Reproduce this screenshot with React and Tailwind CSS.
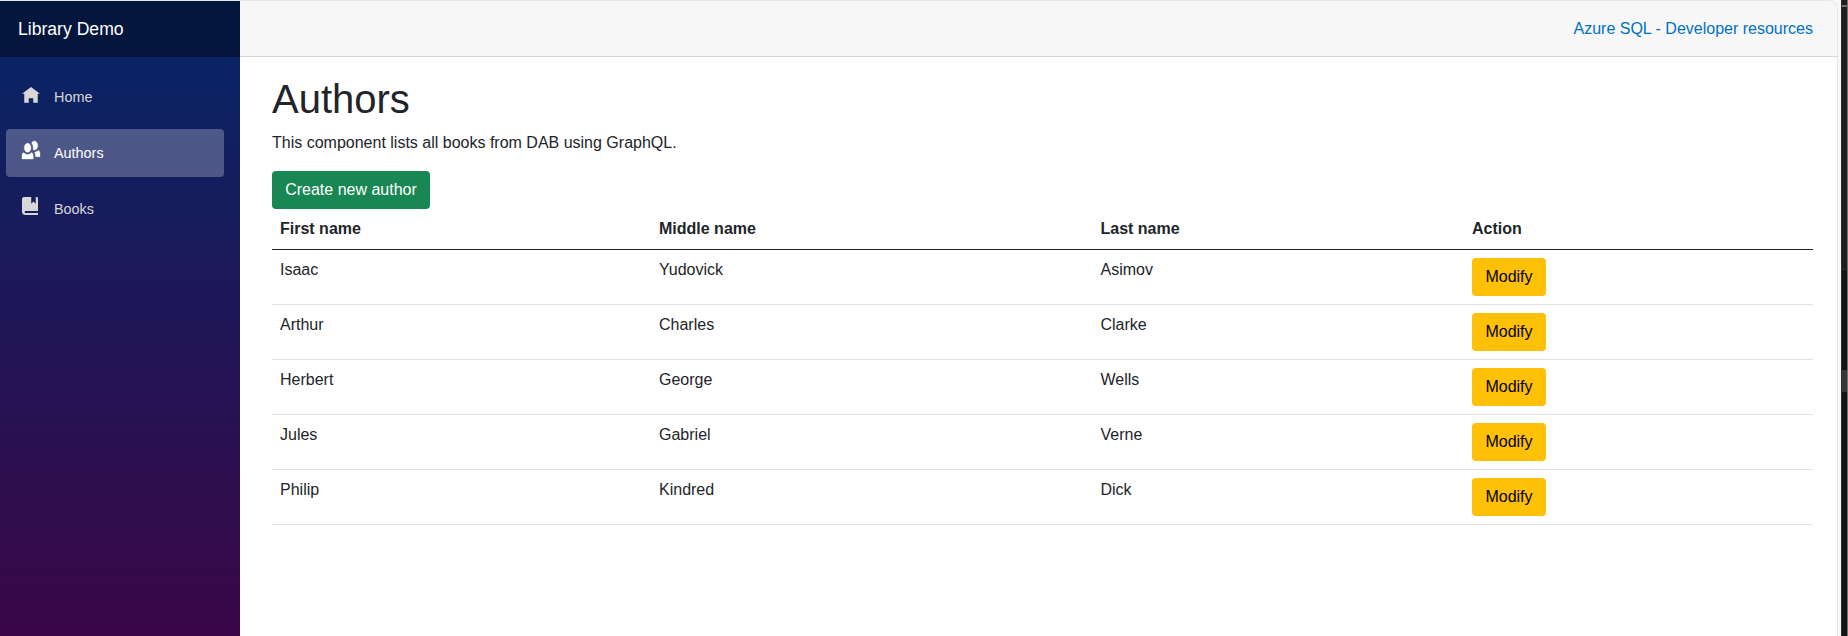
const icons = {
  home: 'M4 0l-4 3h1v4h2v-2h2v2h2v-4.03l1 .03-4-3z',
  people:
    'M5.5 0c-.51 0-.95.35-1.22.88.45.54.72 1.275.72 2.125 0 .29-.03.55-.09.81.19.11.38.19.59.19.83 0 1.5-.9 1.5-2s-.67-2-1.5-2zm-3 1c-.828 0-1.5.895-1.5 2s.672 2 1.5 2 1.5-.895 1.5-2-.672-2-1.5-2zm4.75 3.16c-.43.51-1.02.82-1.69.84.27.38.44.84.44 1.34v.66h2v-1.66c0-.52-.31-.97-.75-1.19zm-6.5 1c-.44.22-.75.67-.75 1.19v1.66h5v-1.66c0-.52-.31-.97-.75-1.19-.45.53-1.06.84-1.75.84s-1.3-.32-1.75-.84z',
  book: 'M1 0c-.07 0-.13.01-.19.03-.39.08-.7.39-.78.78-.03.06-.03.12-.03.19v5.5c0 .83.67 1.5 1.5 1.5h5.6v-.9h-5.5c-.28 0-.4-.22-.4-.42s.12-.42.4-.42h5.5v-5.76c0-.28-.22-.5-.5-.5h-.5v3l-1-1-1 1v-3h-3z',
};

const authors = [
  ['Isaac', 'Yudovick', 'Asimov'],
  ['Arthur', 'Charles', 'Clarke'],
  ['Herbert', 'George', 'Wells'],
  ['Jules', 'Gabriel', 'Verne'],
  ['Philip', 'Kindred', 'Dick'],
];

function NavItem({ icon, label, active }) {
  return (
    <a
      href="#"
      className={
        'flex h-12 items-start rounded px-4 text-[14.4px] leading-[48px] ' +
        (active ? 'bg-white/25 text-white' : 'text-[#d7d7d7]')
      }
    >
      <span className={'w-8 shrink-0 ' + (icon === 'home' ? 'pt-3.5' : 'pt-3')}>
        <svg
          viewBox="0 0 8 8"
          className="block size-[18px] overflow-visible"
          fill="currentColor"
          stroke="currentColor"
          strokeWidth={icon === 'people' ? 0.15 : 0}
        >
          <path d={icons[icon]} />
        </svg>
      </span>
      {label}
    </a>
  );
}

function Sidebar() {
  return (
    <aside className="w-60 shrink-0 bg-linear-[180deg,#052767,#3a0647]">
      <div className="flex h-14 items-center bg-black/40 pl-[18px] text-[17.6px] text-white">
        Library Demo
      </div>
      <nav className="flex flex-col gap-2 pt-4 pr-4 pl-1.5">
        <NavItem icon="home" label="Home" />
        <NavItem icon="people" label="Authors" active />
        <NavItem icon="book" label="Books" />
      </nav>
    </aside>
  );
}

function AuthorsTable() {
  return (
    <table className="w-full table-fixed border-collapse text-left">
      <colgroup>
        <col className="w-[379px]" />
        <col className="w-[441.5px]" />
        <col className="w-[371.5px]" />
        <col />
      </colgroup>
      <thead>
        <tr className="border-b border-[#212529]">
          {['First name', 'Middle name', 'Last name', 'Action'].map((h) => (
            <th key={h} className="p-2 font-bold">{h}</th>
          ))}
        </tr>
      </thead>
      <tbody>
        {authors.map((row) => (
          <tr key={row[0]} className="border-b border-[#dee2e6]">
            {row.map((cell) => (
              <td key={cell} className="p-2 align-top">{cell}</td>
            ))}
            <td className="p-2">
              <button className="block h-[38px] w-[74px] rounded bg-[#ffc107] text-black">Modify</button>
            </td>
          </tr>
        ))}
      </tbody>
    </table>
  );
}

export default function App() {
  return (
    <div className="flex h-[636px] w-[1848px] overflow-hidden bg-[#f7f7f7] font-['Liberation_Sans',Arial,sans-serif] text-base text-[#212529]">
      <div className="flex w-[1838px] shrink-0 overflow-hidden rounded-tr-[10px] border-t border-r border-[#e6e6e6] bg-white">
        <Sidebar />
        <main className="min-w-0 flex-1">
          <header className="flex h-14 items-center justify-end border-b border-[#d6d5d5] bg-[#f7f7f7] pr-6">
            <a href="#" className="text-[#0071c1]">Azure SQL - Developer resources</a>
          </header>
          <article className="pt-[17.6px] pr-6 pl-8">
            <h1 className="mb-2 text-[40px] leading-[48px]">Authors</h1>
            <p className="mb-4">This component lists all books from DAB using GraphQL.</p>
            <button className="block h-[38px] w-[158px] rounded bg-[#198754] text-white">Create new author</button>
            <AuthorsTable />
          </article>
        </main>
      </div>
      <div className="w-[3px] shrink-0" />
      <div className="flex w-[7px] shrink-0 flex-col border-r border-l border-r-[#737373] border-l-[#2e2e2e] bg-[#141414]">
        <div className="h-[5px] bg-[#1e1e1e]" />
        <div className="h-0.5 bg-[#737373]" />
        <div className="h-[262px] bg-[#1e1e1e]" />
        <div className="h-px bg-[#2e2e2e]" />
        <div className="h-[100px]" />
        <div className="h-[22px] bg-[#373737]" />
      </div>
    </div>
  );
}
